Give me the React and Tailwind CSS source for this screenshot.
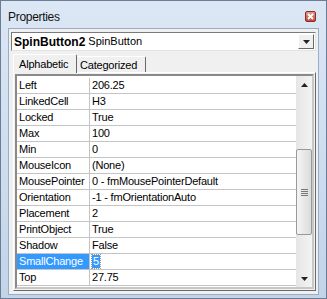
const rows = [
  ["Left", "206.25"],
  ["LinkedCell", "H3"],
  ["Locked", "True"],
  ["Max", "100"],
  ["Min", "0"],
  ["MouseIcon", "(None)"],
  ["MousePointer", "0 - fmMousePointerDefault"],
  ["Orientation", "-1 - fmOrientationAuto"],
  ["Placement", "2"],
  ["PrintObject", "True"],
  ["Shadow", "False"],
  ["SmallChange", "5", true],
  ["Top", "27.75"],
];

const ArrowUp = () => (
  <svg width="7" height="4" viewBox="0 0 7 4">
    <path d="M0 4 L3.5 0 L7 4 Z" fill="#222" />
  </svg>
);

const ArrowDown = () => (
  <svg width="7" height="4" viewBox="0 0 7 4">
    <path d="M0 0 L7 0 L3.5 4 Z" fill="#222" />
  </svg>
);

export default function App() {
  return (
    <div className="w-[327px] h-[299px] border border-[#6b7d95] bg-gradient-to-b from-[#dce7f5] to-[#c3d4e9] flex flex-col overflow-hidden font-['Liberation_Sans',Arial,sans-serif] text-black">
      {/* Title bar */}
      <div className="h-[27px] flex items-center justify-between pl-[7px] pr-[10px] pt-[4px]">
        <span className="text-[12px] tracking-[-0.3px] leading-none text-[#111]">Properties</span>
        <div className="w-[11px] h-[11px] rounded-[2px] border border-[#8c2b22] bg-gradient-to-b from-[#e49a8e] to-[#c4473a] flex items-center justify-center">
          <svg width="7" height="7" viewBox="0 0 7 7">
            <path d="M1 1 L6 6 M6 1 L1 6" stroke="#fff" strokeWidth="1.8" />
          </svg>
        </div>
      </div>

      {/* Window body */}
      <div className="mx-[7px] h-[267px] border border-[#9badc4] bg-[#f0f0f0] flex flex-col">
        {/* Object combobox */}
        <div className="mt-[3px] ml-[2px] w-[305px] h-[19px] border border-[#7a7a7a] border-r-[#e3e3e3] border-b-[#e3e3e3] bg-white flex items-center">
          <div className="flex-1 flex items-center pl-[2px] leading-none">
            <span className="text-[12px] font-bold">SpinButton2</span>
            <span className="text-[11px] ml-[3px]">SpinButton</span>
          </div>
          <div className="w-[16px] h-[15px] mr-[1px] bg-[#f0f0f0] border border-white border-r-[#696969] border-b-[#696969] flex items-center justify-center">
            <ArrowDown />
          </div>
        </div>

        {/* Tabs */}
        <div className="mt-[3px] ml-[4px] h-[18px] flex items-end relative z-10 text-[11px] tracking-[-0.2px] leading-none">
          <div className="w-[64px] h-[19px] -mb-[1px] bg-[#f0f0f0] border border-b-0 border-white border-r-[#696969] rounded-t-[2px] pl-[5px] pt-[4px]">
            Alphabetic
          </div>
          <div className="w-[69px] h-[16px] bg-[#f0f0f0] border-t border-r border-t-white border-r-[#696969] rounded-tr-[2px] pl-[3px] pt-[3px]">
            Categorized
          </div>
        </div>

        {/* Tab page */}
        <div className="ml-[4px] w-[303px] h-[219px] border border-white border-r-[#696969] border-b-[#696969] p-[1px]">
          <div className="h-full border-2 border-t-[#8a8a8a] border-l-[#8a8a8a] border-r-[#c8c8c8] border-b-[#c8c8c8] bg-white flex">
            {/* Grid */}
            <div className="w-[279px] pt-[2px] text-[11px] tracking-[-0.2px] leading-none">
              {rows.map(([name, value, selected]) => (
                <div key={name} className="h-[16px] flex border-b border-[#c4c4c4]">
                  <div
                    className={`w-[73px] border-r border-[#c4c4c4] pl-[2px] flex items-center ${
                      selected ? "bg-[#3399ff] text-white" : ""
                    }`}
                  >
                    {name}
                  </div>
                  <div className="flex-1 pl-[2px] flex items-center whitespace-nowrap overflow-hidden">
                    {selected ? (
                      <span className="bg-[#3399ff] text-white px-[1px] h-[13px] flex items-center outline-1 outline-dotted outline-[#999]">
                        {value}
                      </span>
                    ) : (
                      value
                    )}
                  </div>
                </div>
              ))}
            </div>

            {/* Scrollbar */}
            <div className="w-[16px] h-full bg-gradient-to-r from-[#e6e6e6] to-[#f3f3f3] flex flex-col">
              <div className="h-[17px] flex items-center justify-center">
                <ArrowUp />
              </div>
              <div className="flex-1">
                <div className="mt-[56px] h-[86px] border border-[#999] rounded-[2px] bg-gradient-to-r from-[#f4f4f4] to-[#dcdcdc] flex flex-col items-center justify-center gap-[1px]">
                  <div className="w-[7px] h-[1px] bg-[#777]" />
                  <div className="w-[7px] h-[1px] bg-[#777]" />
                  <div className="w-[7px] h-[1px] bg-[#777]" />
                  <div className="w-[7px] h-[1px] bg-[#777]" />
                </div>
              </div>
              <div className="h-[17px] flex items-center justify-center">
                <ArrowDown />
              </div>
            </div>
          </div>
        </div>
      </div>
    </div>
  );
}
